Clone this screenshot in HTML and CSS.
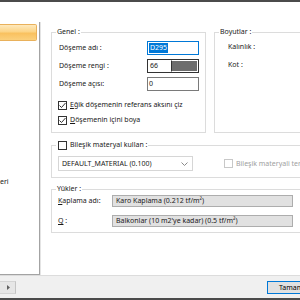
FILE: index.html
```html
<!DOCTYPE html>
<html lang="tr">
<head>
    <meta charset="UTF-8">
    <meta name="viewport" content="width=device-width, initial-scale=1.0">
    <title>Döşeme Özellikleri</title>
    <link rel="stylesheet" href="styles.css">
</head>
<body>
    <div class="window">
        <div class="main">
            <div class="sidebar">
                <div class="tree-item selected"></div>
                <div class="tree-item lower">eri</div>
            </div>

            <div class="content">
                <div class="top-row">
                    <fieldset class="group genel">
                        <legend>Genel :</legend>
                        <div class="field-row">
                            <span class="label">Döşeme adı :</span>
                            <span class="input focused"><span class="selection">D295</span></span>
                        </div>
                        <div class="field-row">
                            <span class="label">Döşeme rengi :</span>
                            <span class="input color-input">
                                <span class="color-value">66</span>
                                <span class="swatch"></span>
                            </span>
                        </div>
                        <div class="field-row">
                            <span class="label">Döşeme açısı:</span>
                            <span class="input">0</span>
                        </div>
                        <div class="check-row first">
                            <span class="check checked">
                                <svg viewBox="0 0 9 9" width="9" height="9"><polyline points="1.5,4.5 3.5,6.5 7.5,2" fill="none" stroke="#333" stroke-width="1"/></svg>
                            </span>
                            <span><u>E</u>ğik döşemenin referans aksını çiz</span>
                        </div>
                        <div class="check-row">
                            <span class="check checked">
                                <svg viewBox="0 0 9 9" width="9" height="9"><polyline points="1.5,4.5 3.5,6.5 7.5,2" fill="none" stroke="#333" stroke-width="1"/></svg>
                            </span>
                            <span><u>D</u>öşemenin içini boya</span>
                        </div>
                    </fieldset>

                    <fieldset class="group boyutlar">
                        <legend>Boyutlar :</legend>
                        <div class="dim-row">Kalınlık :</div>
                        <div class="dim-row">Kot :</div>
                    </fieldset>
                </div>

                <fieldset class="group bilesik">
                    <legend class="check-legend"><span class="check"></span>Bileşik materyal kullan :</legend>
                    <div class="combo-row">
                        <div class="combo">
                            <span>DEFAULT_MATERIAL (0.100)</span>
                            <svg class="chevron" viewBox="0 0 7 4" width="7" height="4"><polyline points="0.5,0.5 3.5,3.5 6.5,0.5" fill="none" stroke="#8a8a8a" stroke-width="1"/></svg>
                        </div>
                        <div class="check-row disabled">
                            <span class="check"></span>
                            <span>Bileşik materyali ters</span>
                        </div>
                    </div>
                </fieldset>

                <fieldset class="group yukler">
                    <legend>Yükler :</legend>
                    <div class="load-row">
                        <span class="load-label"><u>K</u>aplama adı:</span>
                        <span class="load-button">Karo Kaplama (0.212 tf/m²)</span>
                    </div>
                    <div class="load-row">
                        <span class="load-label"><u>Q</u> :</span>
                        <span class="load-button">Balkonlar (10 m2'ye kadar) (0.5 tf/m²)</span>
                    </div>
                </fieldset>
            </div>
        </div>

        <div class="footer">
            <div class="scroll-btn">
                <svg viewBox="0 0 3 5" width="3" height="5"><polygon points="0,0 3,2.5 0,5" fill="#606060"/></svg>
            </div>
            <button class="ok-btn">Tamam</button>
        </div>
    </div>
</body>
</html>
```

FILE: styles.css
```css
* {
    box-sizing: border-box;
    margin: 0;
    padding: 0;
}

html, body {
    width: 300px;
    height: 300px;
    overflow: hidden;
}

body {
    font-family: 'Noto Sans', 'Open Sans', sans-serif;
    font-size: 7px;
    line-height: 10px;
    color: #1a1a1a;
}

.window {
    width: 320px;
    height: 300px;
    display: flex;
    flex-direction: column;
    border-top: 2px solid #4b4b4b;
    border-bottom: 2px solid #4b4b4b;
    background-color: #fff;
}

.main {
    flex: 1;
    display: flex;
    overflow: hidden;
}

/* left tree */
.sidebar {
    width: 40px;
    margin-top: 20px;
    border-right: 1px solid #a3a3a3;
    border-bottom: 1px solid #a3a3a3;
    box-shadow: 1px 0 0 #e4e4e4;
}

.tree-item {
    height: 12px;
}

.tree-item.selected {
    width: 37px;
    height: 17px;
    margin-top: 2px;
    border: 1px solid #e9b15b;
    border-left: none;
    border-radius: 0 2px 2px 0;
    background: linear-gradient(#fee9bd, #fcd486 45%, #f9c15f 55%, #fbd07c);
}

.tree-item.lower {
    margin-top: 136px;
}

.content {
    width: 268px;
    margin-left: 11px;
    padding-top: 25px;
}

.top-row {
    display: flex;
    gap: 8px;
}

.group {
    border: 1px solid #dcdcdc;
    padding: 0 6px 0 4px;
}

.group legend {
    padding: 0 1px;
    line-height: 10px;
}

/* Genel */
.genel {
    width: 155px;
    padding-top: 4px;
    padding-bottom: 7px;
}

.field-row {
    display: flex;
    justify-content: space-between;
    align-items: center;
    height: 14px;
    margin-left: 3px;
    margin-bottom: 4px;
}

.input {
    width: 52px;
    height: 14px;
    border: 1px solid #7a7a7a;
    background-color: #fff;
    padding-left: 1px;
    line-height: 12px;
    display: flex;
}

.input.focused {
    border-color: #0078d7;
    padding: 1px 0 0 1px;
}

.selection {
    background-color: #0078d7;
    color: #fff;
    height: 10px;
    line-height: 10px;
    padding: 0 1px;
}

.color-input {
    border-color: #333;
    padding: 0;
}

.color-value {
    width: 23px;
    padding-left: 2px;
}

.swatch {
    flex: 1;
    background-color: #6d6d6d;
    border: 1px solid #fff;
    border-left: 1px solid #333;
}

.check-row {
    display: flex;
    align-items: center;
    gap: 3px;
    height: 10px;
    margin-top: 5px;
    margin-left: 2px;
}

.check-row.first {
    margin-top: 9px;
}

.check {
    width: 9px;
    height: 9px;
    border: 1px solid #333;
    background-color: #fff;
    display: inline-flex;
    flex-shrink: 0;
}

.check svg {
    margin: -1px;
}

.check-row.disabled {
    color: #a0a0a0;
    margin: 0;
    white-space: nowrap;
}

.check-row.disabled .check {
    border-color: #c8c8c8;
}

/* Boyutlar */
.boyutlar {
    flex: 1;
    padding-top: 5px;
}

.dim-row {
    margin-left: 9px;
    margin-bottom: 8px;
}

/* Bileşik materyal */
.bilesik {
    margin-top: 7px;
    padding-top: 6px;
    padding-bottom: 6px;
}

.check-legend {
    display: flex;
    align-items: center;
    gap: 3px;
}

.check-legend .check {
    margin-left: 1px;
}

.combo-row {
    display: flex;
    align-items: center;
    gap: 31px;
    margin-left: 2px;
}

.combo {
    width: 135px;
    height: 15px;
    border: 1px solid #d6d6d6;
    display: flex;
    align-items: center;
    justify-content: space-between;
    padding: 0 4px 0 3px;
}

/* Yükler */
.yukler {
    margin-top: 6px;
    padding-top: 1px;
    padding-bottom: 5px;
}

.load-row {
    display: flex;
    align-items: center;
    margin-left: 2px;
    margin-bottom: 8px;
}

.load-row:last-child {
    margin-bottom: 0;
}

.load-label {
    width: 54px;
}

.load-button {
    width: 181px;
    height: 12px;
    line-height: 10px;
    border: 1px solid #adadad;
    background-color: #e1e1e1;
    padding-left: 3px;
}

/* footer */
.footer {
    height: 23px;
    border-top: 1px solid #dcdcdc;
    background-color: #f0f0f0;
    display: flex;
    justify-content: space-between;
    align-items: flex-start;
    padding-top: 5px;
}

.scroll-btn {
    width: 16px;
    height: 13px;
    background-color: #e6e6e6;
    border-right: 1px solid #c4c4c4;
    border-bottom: 1px solid #d4d4d4;
    border-top: 1px solid #d4d4d4;
    display: flex;
    align-items: center;
    justify-content: center;
    padding-left: 2px;
}

.ok-btn {
    width: 45px;
    height: 13px;
    margin-right: 8px;
    border: 1px solid #0078d7;
    background-color: #e1e1e1;
    font-family: inherit;
    font-size: 7px;
    line-height: 10px;
    text-align: left;
    padding-left: 11px;
    color: #000;
}
```
